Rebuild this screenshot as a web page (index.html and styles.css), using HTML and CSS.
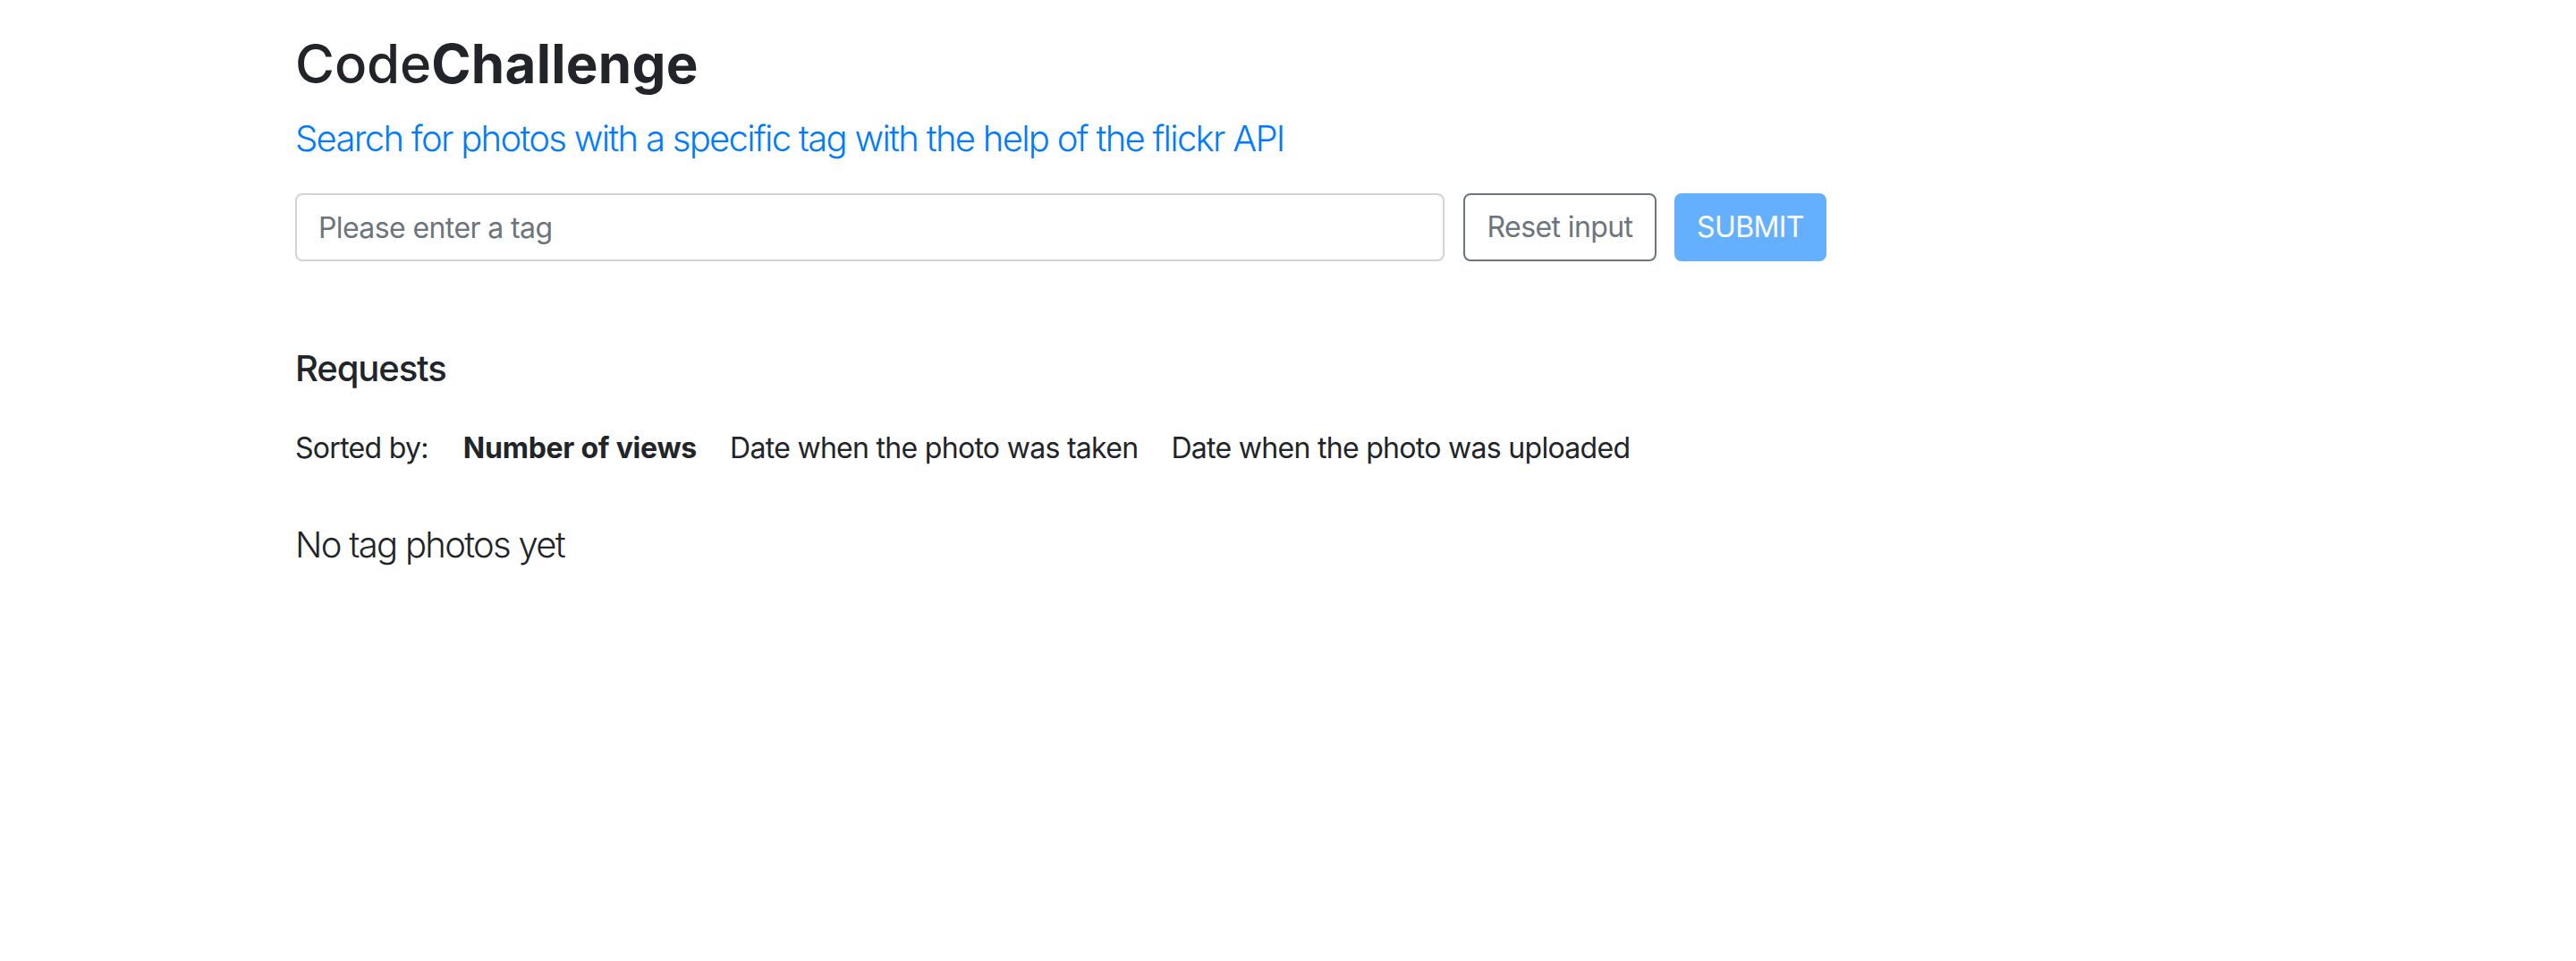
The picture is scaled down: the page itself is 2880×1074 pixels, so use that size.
FILE: index.html
```html
<!DOCTYPE html>
<html lang="en">
<head>
<meta charset="utf-8">
<title>CodeChallenge</title>
<link rel="stylesheet" href="styles.css">
</head>
<body>
<main class="page">
  <h1 class="title">Code<strong>Challenge</strong></h1>
  <p class="lead">Search for photos with a specific tag with the help of the flickr API</p>
  <form class="search">
    <input class="tag-input" type="text" placeholder="Please enter a tag">
    <button class="btn btn-reset" type="button">Reset input</button>
    <button class="btn btn-submit" type="submit" disabled>SUBMIT</button>
  </form>
  <h2 class="section-title">Requests</h2>
  <div class="sort">
    <span class="sort-label">Sorted by:</span>
    <span class="sort-item active">Number of views</span>
    <span class="sort-item">Date when the photo was taken</span>
    <span class="sort-item">Date when the photo was uploaded</span>
  </div>
  <p class="empty">No tag photos yet</p>
</main>
</body>
</html>
```
FILE: styles.css
```css
* { box-sizing: border-box; }
html, body { margin: 0; padding: 0; background: #fff; }
body {
  font-family: Inter, "Noto Sans", "Liberation Sans", sans-serif;
  color: #212529;
}
.page {
  padding: 35px 0 0 330px;
}
.title {
  margin: 0;
  font-size: 60px;
  line-height: 72px;
  font-weight: 500;
  letter-spacing: -0.1px;
  color: #212529;
}
.title strong { font-weight: 700; letter-spacing: 0.3px; }
.lead {
  margin: 24px 0 0;
  font-size: 40px;
  line-height: 48px;
  font-weight: 300;
  letter-spacing: -1.7px;
  color: #007bff;
}
.search {
  margin-top: 37px;
  display: flex;
  align-items: stretch;
  height: 76px;
}
.tag-input {
  width: 1285px;
  height: 76px;
  padding: 0 24px;
  border: 2px solid #ced4da;
  border-radius: 8px;
  font-family: inherit;
  font-size: 32px;
  letter-spacing: -0.6px;
  color: #495057;
  outline: none;
}
.tag-input::placeholder { color: #6c757d; opacity: 1; }
.btn {
  height: 76px;
  padding: 0;
  border-radius: 8px;
  font-family: inherit;
  font-size: 32px;
  line-height: 1;
  letter-spacing: -0.6px;
  white-space: nowrap;
  margin-left: 21px;
  text-align: center;
}
.btn-reset {
  width: 216px;
  background: #fff;
  color: #6c757d;
  border: 2px solid #6c757d;
}
.btn-submit {
  width: 170px;
  margin-left: 20px;
  background: #007bff;
  border: 2px solid #007bff;
  color: #fff;
  opacity: 0.6;
}
.section-title {
  margin: 96px 0 0;
  font-size: 40px;
  line-height: 48px;
  font-weight: 500;
  letter-spacing: -1.1px;
}
.sort {
  margin-top: 45px;
  display: flex;
  font-size: 32px;
  line-height: 40px;
  letter-spacing: -0.7px;
}
.sort-label { margin-right: 39px; }
.sort-item { margin-right: 37px; }
.sort-item.active { font-weight: 700; letter-spacing: -0.25px; }
.empty {
  margin: 64px 0 0;
  font-size: 40px;
  line-height: 48px;
  font-weight: 300;
  letter-spacing: -1.7px;
}
```
